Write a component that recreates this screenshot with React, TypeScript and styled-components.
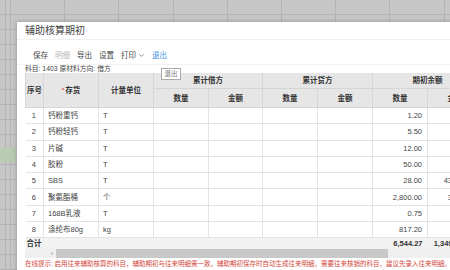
import React from 'react'
import styled, { createGlobalStyle } from 'styled-components'
import { ChevronDown } from 'lucide-react'

const GlobalStyle = createGlobalStyle`
	html, body {
		margin: 0;
		padding: 0;
	}
	body {
		width: 450px;
		height: 270px;
		overflow: hidden;
		font-family: 'Liberation Sans', 'Noto Sans CJK SC', sans-serif;
		color: #333;
	}
`

const Sheet = styled.div`
	position: relative;
	width: 450px;
	height: 270px;
	overflow: hidden;
	background-color: #c6c6c6;
	background-image: linear-gradient(#b9ccb1, #b9ccb1),
		repeating-linear-gradient(to bottom, #b4b4b4 0 1px, transparent 1px 15px),
		repeating-linear-gradient(to right, #b4b4b4 0 1px, transparent 1px 54.2px),
		linear-gradient(to right, #b4b4b4, #b4b4b4);
	background-size: 16px 14px, auto, auto, 1px 100%;
	background-position: 0 148px, 0 14px, 10px 0, 5px 0;
	background-repeat: no-repeat, repeat, repeat, no-repeat;
`

const Dialog = styled.div`
	position: absolute;
	left: 17px;
	top: 22px;
	width: 520px;
	height: 300px;
	background: #fff;
	box-shadow: 0 0 5px rgba(0, 0, 0, 0.25);
	display: flex;
	flex-direction: column;
`

const Title = styled.div`
	height: 17px;
	line-height: 17px;
	padding-left: 8px;
	font-size: 10px;
	color: #444;
	border-bottom: 1px solid #f0f0f0;
`

const Toolbar = styled.div`
	height: 25px;
	box-sizing: border-box;
	padding: 7px 0 0 16px;
	display: flex;
	align-items: center;
	gap: 7px;
	font-size: 7.5px;
	border-bottom: 1px solid #f2f2f2;
`

const ToolItem = styled.span<{ $tone?: 'muted' | 'link' }>`
	display: inline-flex;
	align-items: center;
	line-height: 10px;
	color: ${(p) =>
		p.$tone === 'muted' ? '#b5b5b5' : p.$tone === 'link' ? '#3d8fdc' : '#444'};
	svg {
		margin-left: 2px;
	}
`

const Tip = styled.div`
	position: absolute;
	left: 144px;
	top: 46px;
	width: 20px;
	height: 12px;
	box-sizing: border-box;
	border: 1px solid #a9a9a9;
	background: #fff;
	font-size: 6.5px;
	line-height: 10px;
	text-align: center;
	color: #777;
`

const Info = styled.div`
	height: 8px;
	line-height: 8px;
	padding-left: 8px;
	font-size: 6.8px;
	color: #444;
`

const Grid = styled.table`
	margin-left: 8px;
	border-collapse: collapse;
	table-layout: fixed;
	width: 458px;
`

const HeadCell = styled.th<{ $h?: number }>`
	height: ${(p) => p.$h ?? 15}px;
	padding: 0;
	background: #e6e6e6;
	border: 1px solid #d6d6d6;
	border-top: none;
	font-size: 7.5px;
	font-weight: bold;
	line-height: 9px;
	color: #333;
	text-align: center;
	white-space: nowrap;
`

const Star = styled.span`
	color: #e0453a;
	font-size: 6px;
	margin-right: 1px;
	vertical-align: top;
`

const Row = styled.tr`
	height: 16.3px;
`

const Cell = styled.td<{ $align?: 'left' | 'center' | 'right' }>`
	padding: 0 5px 0 4px;
	border: 1px solid #e3e3e3;
	border-left: none;
	font-size: 7.5px;
	line-height: 9px;
	color: #444;
	text-align: ${(p) => p.$align ?? 'left'};
	white-space: nowrap;
	overflow: hidden;
`

const TotalRow = styled.tr`
	height: 11px;
	background: #f2f2f2;
`

const TotalCell = styled.td<{ $align?: 'left' | 'right' }>`
	padding: 0 5px 0 1px;
	font-size: 7.5px;
	font-weight: bold;
	line-height: 9px;
	color: #333;
	text-align: ${(p) => p.$align ?? 'right'};
	white-space: nowrap;
	overflow: hidden;
`

const Scroll = styled.div`
	margin-left: 8px;
	height: 9px;
	background: #efefef;
	display: flex;
	align-items: stretch;
`

const ScrollArrow = styled.span`
	width: 28px;
	font-size: 7px;
	line-height: 9px;
	text-align: right;
	padding-right: 3px;
	color: #888;
`

const ScrollThumb = styled.span`
	width: 332px;
	background: #c8c8c8;
`

const Notice = styled.div`
	padding-left: 8px;
	height: 12px;
	line-height: 12px;
	font-size: 6.5px;
	color: #d2473c;
	white-space: nowrap;
`

type Item = { name: string; unit: string; qty: string; amount: string }

const items: Item[] = [
	{ name: '钙粉重钙', unit: 'T', qty: '1.20', amount: '108.00' },
	{ name: '钙粉轻钙', unit: 'T', qty: '5.50', amount: '275.00' },
	{ name: '片碱', unit: 'T', qty: '12.00', amount: '480.00' },
	{ name: '胶粉', unit: 'T', qty: '50.00', amount: '750.00' },
	{ name: 'SBS', unit: 'T', qty: '28.00', amount: '43,400.00' },
	{ name: '聚氨酯桶', unit: '个', qty: '2,800.00', amount: '3,500.00' },
	{ name: '168B乳液', unit: 'T', qty: '0.75', amount: '562.50' },
	{ name: '涤纶布80g', unit: 'kg', qty: '817.20', amount: '736.00' },
]

export default function App() {
	return (
		<Sheet>
			<GlobalStyle />
			<Dialog>
				<Title>辅助核算期初</Title>
				<Toolbar>
					<ToolItem>保存</ToolItem>
					<ToolItem $tone="muted">明细</ToolItem>
					<ToolItem>导出</ToolItem>
					<ToolItem>设置</ToolItem>
					<ToolItem>
						打印
						<ChevronDown size={7} strokeWidth={2} />
					</ToolItem>
					<ToolItem $tone="link">退出</ToolItem>
				</Toolbar>
				<Tip>退出</Tip>
				<Info>科目: 1403 原材料方向: 借方</Info>
				<Grid>
					<colgroup>
						<col style={{ width: 18 }} />
						<col style={{ width: 55 }} />
						<col style={{ width: 55 }} />
						<col style={{ width: 55 }} />
						<col style={{ width: 54 }} />
						<col style={{ width: 55 }} />
						<col style={{ width: 55 }} />
						<col style={{ width: 55 }} />
						<col style={{ width: 55 }} />
					</colgroup>
					<thead>
						<tr>
							<HeadCell rowSpan={2}>序号</HeadCell>
							<HeadCell rowSpan={2}>
								<Star>*</Star>存货
							</HeadCell>
							<HeadCell rowSpan={2}>计量单位</HeadCell>
							<HeadCell colSpan={2}>累计借方</HeadCell>
							<HeadCell colSpan={2}>累计贷方</HeadCell>
							<HeadCell colSpan={2}>期初余额</HeadCell>
						</tr>
						<tr>
							<HeadCell $h={18}>数量</HeadCell>
							<HeadCell $h={18}>金额</HeadCell>
							<HeadCell $h={18}>数量</HeadCell>
							<HeadCell $h={18}>金额</HeadCell>
							<HeadCell $h={18}>数量</HeadCell>
							<HeadCell $h={18}>金额</HeadCell>
						</tr>
					</thead>
					<tbody>
						{items.map((it, i) => (
							<Row key={i}>
								<Cell $align="center">{i + 1}</Cell>
								<Cell>{it.name}</Cell>
								<Cell>{it.unit}</Cell>
								<Cell />
								<Cell />
								<Cell />
								<Cell />
								<Cell $align="right">{it.qty}</Cell>
								<Cell $align="right">{it.amount}</Cell>
							</Row>
						))}
						<TotalRow>
							<TotalCell $align="left" colSpan={3}>
								合计
							</TotalCell>
							<TotalCell colSpan={4} />
							<TotalCell>6,544.27</TotalCell>
							<TotalCell>1,349,806.50</TotalCell>
						</TotalRow>
					</tbody>
				</Grid>
				<Scroll>
					<ScrollArrow>‹</ScrollArrow>
					<ScrollThumb />
				</Scroll>
				<Notice>
					在线提示: 启用往来辅助核算的科目，辅助期初与往来明细需一致，辅助期初保存时自动生成往来明细，需要往来核销的科目，建议先录入往来明细。
				</Notice>
			</Dialog>
		</Sheet>
	)
}
